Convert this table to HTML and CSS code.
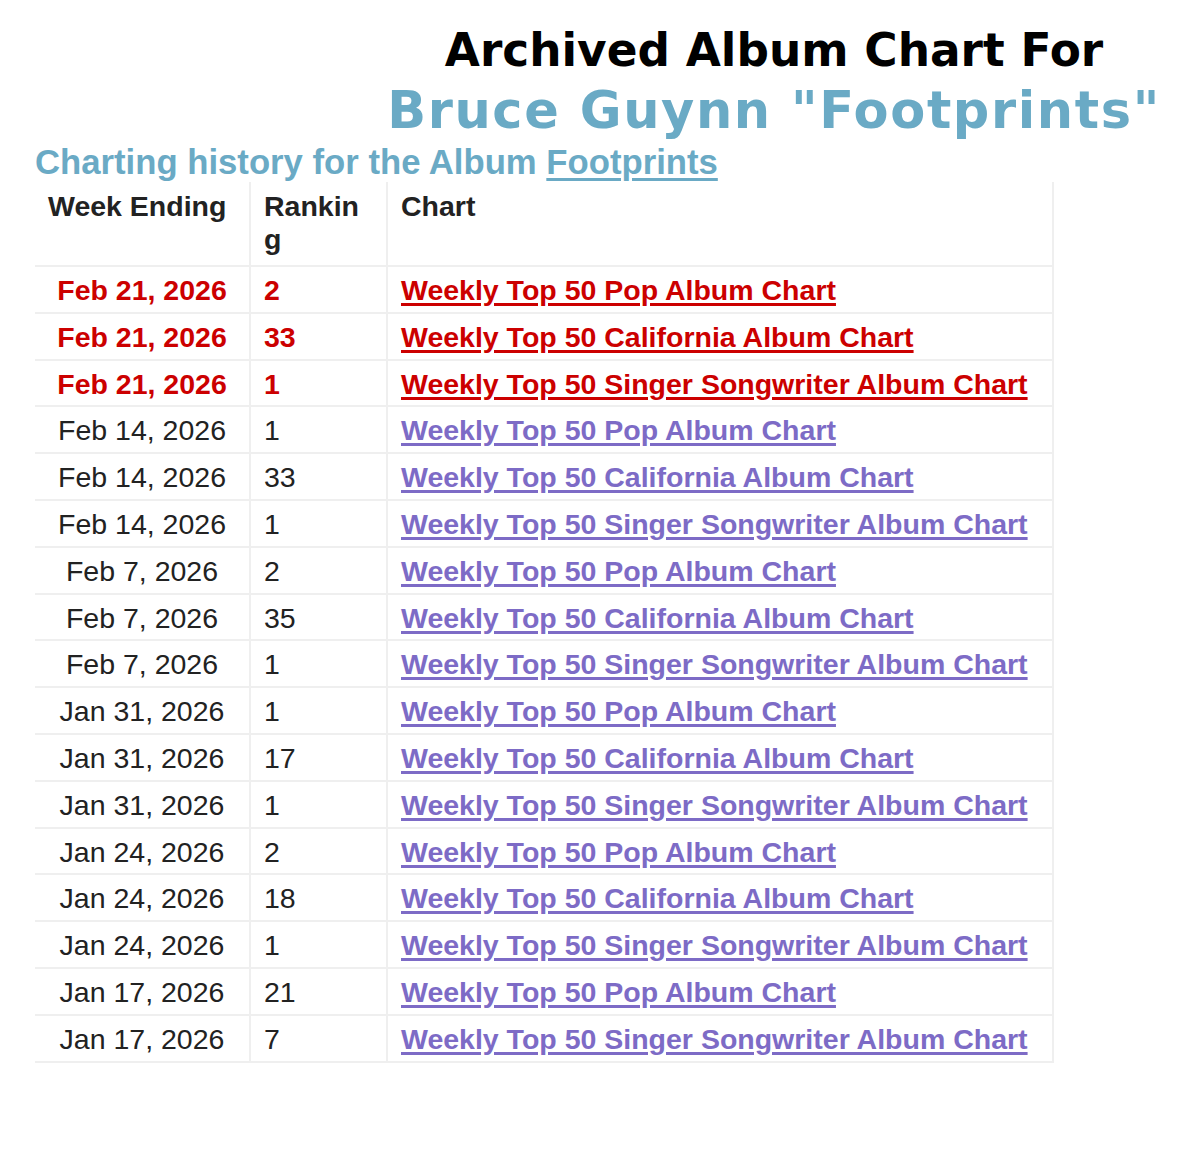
FILE: index.html
```html
<!DOCTYPE html>
<html lang="en">
<head>
<meta charset="utf-8">
<title>Archived Album Chart For Bruce Guynn "Footprints"</title>
<link rel="stylesheet" href="styles.css">
</head>
<body>
<div class="page">
  <header class="title-block">
    <h1 class="title-main">Archived Album Chart For</h1>
    <h2 class="title-artist">Bruce Guynn "Footprints"</h2>
  </header>
  <h3 class="subtitle">Charting history for the Album <a href="#" class="subtitle-link">Footprints</a></h3>
  <table class="chart-table">
    <colgroup>
      <col class="col-week">
      <col class="col-rank">
      <col class="col-chart">
    </colgroup>
    <thead>
      <tr>
        <th>Week Ending</th>
        <th class="rank-head">Ranking</th>
        <th>Chart</th>
      </tr>
    </thead>
    <tbody>
      <tr class="current"><td class="date">Feb 21, 2026</td><td>2</td><td><a href="#">Weekly Top 50 Pop Album Chart</a></td></tr>
      <tr class="current"><td class="date">Feb 21, 2026</td><td>33</td><td><a href="#">Weekly Top 50 California Album Chart</a></td></tr>
      <tr class="current"><td class="date">Feb 21, 2026</td><td>1</td><td><a href="#">Weekly Top 50 Singer Songwriter Album Chart</a></td></tr>
      <tr><td class="date">Feb 14, 2026</td><td>1</td><td><a href="#">Weekly Top 50 Pop Album Chart</a></td></tr>
      <tr><td class="date">Feb 14, 2026</td><td>33</td><td><a href="#">Weekly Top 50 California Album Chart</a></td></tr>
      <tr><td class="date">Feb 14, 2026</td><td>1</td><td><a href="#">Weekly Top 50 Singer Songwriter Album Chart</a></td></tr>
      <tr><td class="date">Feb 7, 2026</td><td>2</td><td><a href="#">Weekly Top 50 Pop Album Chart</a></td></tr>
      <tr><td class="date">Feb 7, 2026</td><td>35</td><td><a href="#">Weekly Top 50 California Album Chart</a></td></tr>
      <tr><td class="date">Feb 7, 2026</td><td>1</td><td><a href="#">Weekly Top 50 Singer Songwriter Album Chart</a></td></tr>
      <tr><td class="date">Jan 31, 2026</td><td>1</td><td><a href="#">Weekly Top 50 Pop Album Chart</a></td></tr>
      <tr><td class="date">Jan 31, 2026</td><td>17</td><td><a href="#">Weekly Top 50 California Album Chart</a></td></tr>
      <tr><td class="date">Jan 31, 2026</td><td>1</td><td><a href="#">Weekly Top 50 Singer Songwriter Album Chart</a></td></tr>
      <tr><td class="date">Jan 24, 2026</td><td>2</td><td><a href="#">Weekly Top 50 Pop Album Chart</a></td></tr>
      <tr><td class="date">Jan 24, 2026</td><td>18</td><td><a href="#">Weekly Top 50 California Album Chart</a></td></tr>
      <tr><td class="date">Jan 24, 2026</td><td>1</td><td><a href="#">Weekly Top 50 Singer Songwriter Album Chart</a></td></tr>
      <tr><td class="date">Jan 17, 2026</td><td>21</td><td><a href="#">Weekly Top 50 Pop Album Chart</a></td></tr>
      <tr><td class="date">Jan 17, 2026</td><td>7</td><td><a href="#">Weekly Top 50 Singer Songwriter Album Chart</a></td></tr>
    </tbody>
  </table>
</div>
</body>
</html>
```

FILE: styles.css
```css
html, body {
  margin: 0;
  padding: 0;
  background: #ffffff;
}

.page {
  padding: 23px 0 0 35px;
  font-family: "Liberation Sans", Arial, sans-serif;
}

.title-block {
  margin-left: 313px;
  width: 852px;
  text-align: center;
  font-family: "DejaVu Sans", Verdana, sans-serif;
  font-weight: bold;
}

.title-main {
  margin: 0;
  font-size: 45.4px;
  line-height: 56px;
  color: #000000;
  font-weight: bold;
}

.title-artist {
  margin: 0;
  font-size: 51px;
  line-height: 63px;
  letter-spacing: 1.6px;
  color: #6aaac5;
  font-weight: bold;
}

.subtitle {
  margin: 0;
  font-size: 34.7px;
  line-height: 40px;
  font-weight: bold;
  color: #6aaac5;
}

.subtitle-link {
  color: #6aaac5;
  text-decoration: underline;
  text-decoration-thickness: 3px;
  text-underline-offset: 4px;
}

.chart-table {
  border-collapse: collapse;
  table-layout: fixed;
  width: 1018px;
  font-size: 28.5px;
  line-height: 30.8px;
  color: #222222;
}

.col-week { width: 215px; }
.col-rank { width: 137px; }
.col-chart { width: 666px; }

.chart-table th,
.chart-table td {
  border-right: 2px solid #efefef;
  border-bottom: 2px solid #efefef;
  padding: 8px 13px 6px;
  text-align: left;
  vertical-align: top;
}

.chart-table th {
  padding: 8px 13px 9px;
  line-height: 33px;
  font-weight: bold;
  color: #222222;
}

.chart-table th.rank-head {
  padding-right: 22px;
  overflow-wrap: anywhere;
}

.chart-table td.date {
  text-align: center;
}

.chart-table a {
  font-weight: bold;
  color: #7d6bc6;
  text-decoration: underline;
  text-decoration-thickness: 3px;
  text-underline-offset: 3px;
}

.chart-table tr.current td {
  color: #cc0000;
  font-weight: bold;
}

.chart-table tr.current a {
  color: #cc0000;
}
```
